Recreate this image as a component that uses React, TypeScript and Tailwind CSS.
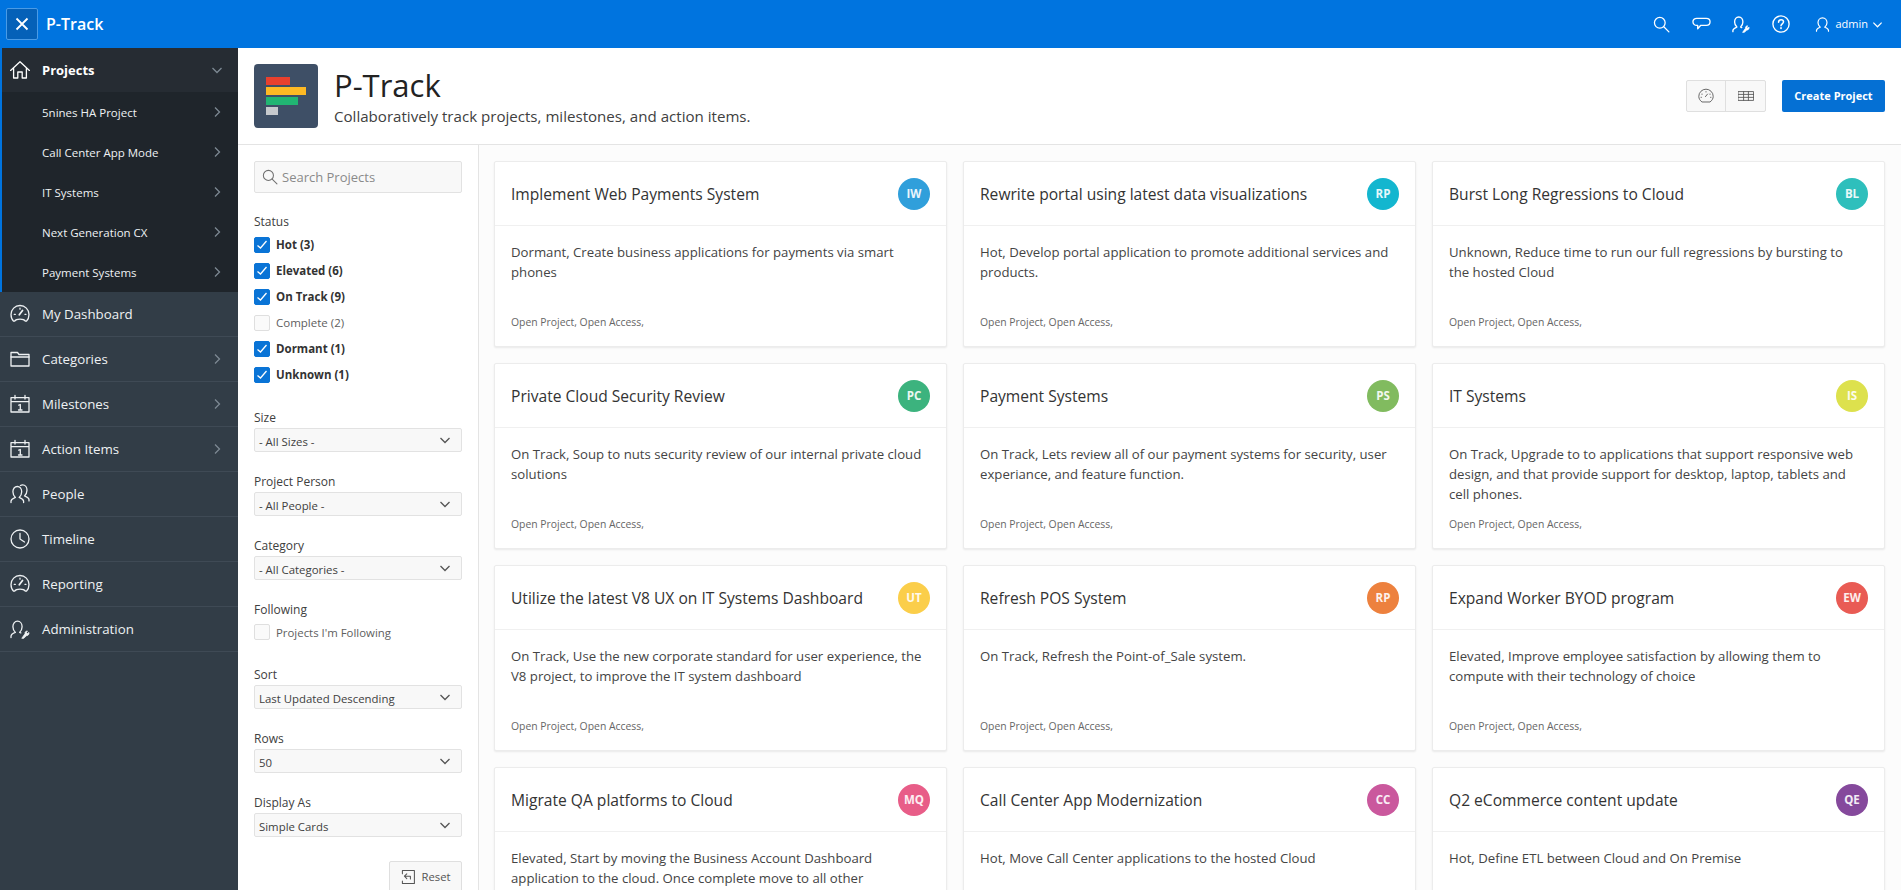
import type { ReactNode } from 'react';

type Card = {
  title: string;
  text: string;
  initials: string;
  color: string;
};

const cards: Card[] = [
  { title: 'Implement Web Payments System', text: 'Dormant, Create business applications for payments via smart phones', initials: 'IW', color: 'bg-[#309fdb]' },
  { title: 'Rewrite portal using latest data visualizations', text: 'Hot, Develop portal application to promote additional services and products.', initials: 'RP', color: 'bg-[#13b6cf]' },
  { title: 'Burst Long Regressions to Cloud', text: 'Unknown, Reduce time to run our full regressions by bursting to\nthe hosted Cloud', initials: 'BL', color: 'bg-[#2ebfbc]' },
  { title: 'Private Cloud Security Review', text: 'On Track, Soup to nuts security review of our internal private cloud solutions', initials: 'PC', color: 'bg-[#3cb37e]' },
  { title: 'Payment Systems', text: 'On Track, Lets review all of our payment systems for security, user experiance, and feature function.', initials: 'PS', color: 'bg-[#81bb5f]' },
  { title: 'IT Systems', text: 'On Track, Upgrade to to applications that support responsive web design, and that provide support for desktop, laptop, tablets and cell phones.', initials: 'IS', color: 'bg-[#dde14d]' },
  { title: 'Utilize the latest V8 UX on IT Systems Dashboard', text: 'On Track, Use the new corporate standard for user experience, the V8 project, to improve the IT system dashboard', initials: 'UT', color: 'bg-[#fbce4a]' },
  { title: 'Refresh POS System', text: 'On Track, Refresh the Point-of_Sale system.', initials: 'RP', color: 'bg-[#ed813e]' },
  { title: 'Expand Worker BYOD program', text: 'Elevated, Improve employee satisfaction by allowing them to compute with their technology of choice', initials: 'EW', color: 'bg-[#e95b54]' },
  { title: 'Migrate QA platforms to Cloud', text: 'Elevated, Start by moving the Business Account Dashboard application to the cloud. Once complete move to all other applications.', initials: 'MQ', color: 'bg-[#e85d88]' },
  { title: 'Call Center App Modernization', text: 'Hot, Move Call Center applications to the hosted Cloud', initials: 'CC', color: 'bg-[#ca589d]' },
  { title: 'Q2 eCommerce content update', text: 'Hot, Define ETL between Cloud and On Premise', initials: 'QE', color: 'bg-[#85499c]' },
];

const subItems = ['5nines HA Project', 'Call Center App Mode', 'IT Systems', 'Next Generation CX', 'Payment Systems'];

const statuses = [
  { label: 'Hot (3)', on: true },
  { label: 'Elevated (6)', on: true },
  { label: 'On Track (9)', on: true },
  { label: 'Complete (2)', on: false },
  { label: 'Dormant (1)', on: true },
  { label: 'Unknown (1)', on: true },
];

function Icon({ size = 20, width = 1.3, children }: { size?: number; width?: number; children: ReactNode }) {
  return (
    <svg width={size} height={size} viewBox="0 0 20 20" fill="none" stroke="currentColor" strokeWidth={width} strokeLinecap="round" strokeLinejoin="round">
      {children}
    </svg>
  );
}

const HomeIcon = () => (
  <Icon>
    <path d="M.6 10.400 10 1.800l9.400 8.600" />
    <path d="M3.600 8.400V18h4.200v-6h4.400v6h4.200V8.400" />
  </Icon>
);
const GaugeIcon = () => (
  <Icon>
    <path d="M4.600 17.200h-1C1.900 15.600 1 13.200 1 10.500a9 9 0 0 1 18 0c0 2.700-.9 5.100-2.600 6.700h-1c-.8-1.300-2.400-2-5.400-2s-4.600.7-5.400 2Z" />
    <path d="m9.300 10.800 3.200-4.300" strokeWidth="1.800" />
    <path d="M10 4.200v1M4.300 10.400h1M15 10.400h.9" />
  </Icon>
);
const FolderIcon = () => (
  <Icon>
    <path d="M1 17V3.500h6.500l1.500 2h10V17H1Z" />
    <path d="M1 8h18" />
  </Icon>
);
const CalendarIcon = () => (
  <Icon>
    <path d="M1 3.700h18V18H1zM1 7.700h18" />
    <path d="M5 1.500v3.500M15 1.500v3.500" />
    <path d="M8.800 11.200 10.300 10.500V16M8.500 16h3.500" />
  </Icon>
);
const PeopleIcon = () => (
  <Icon>
    <path d="M1 18.500v-1.300c0-2 2-2.700 4.400-3.700-1.600-1.600-2.500-3.300-2.500-5.700 0-3 1.800-5.300 4.400-5.300s4.400 2.300 4.400 5.300c0 2.400-.9 4.100-2.500 5.700 2.400 1 4.400 1.700 4.400 3.700v1.300" />
    <path d="M10.400 1.500c.7-.4 1.400-.6 2.200-.6 2.600 0 4.400 2.300 4.400 5.300 0 2.400-.9 4.100-2.500 5.700 2.400 1 4.500 1.700 4.500 3.700v1.300" />
  </Icon>
);
const ClockIcon = () => (
  <Icon>
    <circle cx="10" cy="10" r="9" />
    <path d="M10 4.500V10l4.500 3" />
  </Icon>
);
const AdminIcon = ({ size = 20, width = 1.3 }: { size?: number; width?: number }) => (
  <Icon size={size} width={width}>
    <path d="M1 18.500v-1.300c0-2 2-2.800 4.400-3.800-1.600-1.600-2.500-3.300-2.500-5.700 0-3 1.800-5.500 4.600-5.500s4.600 2.500 4.600 5.500c0 2.400-.9 4.100-2.500 5.700l1.200.5" />
    <path d="m12 19 3-4.300c-.3-1.300.7-2.700 2.400-2.700l-.9 1.600 1 .9 1.500-1c.2 1.900-1 3.300-2.600 3.200l-2.600 2.600Z" fill="currentColor" strokeWidth=".8" />
  </Icon>
);
const SearchIcon = ({ size = 20, width = 1.3 }: { size?: number; width?: number }) => (
  <Icon size={size} width={width}>
    <circle cx="8" cy="8" r="6.300" />
    <path d="m12.700 12.700 6 6" />
  </Icon>
);
const Chevron = ({ dir, size = 12, className = '' }: { dir: 'right' | 'down'; size?: number; className?: string }) => (
  <svg width={size} height={size} viewBox="0 0 12 12" fill="none" stroke="currentColor" strokeWidth="1.300" className={className}>
    <path d={dir === 'right' ? 'M4 1.500 8.500 6 4 10.500' : 'M1.500 4 6 8.500 10.500 4'} />
  </svg>
);

function SideRow({ icon, label, more }: { icon: ReactNode; label: string; more?: boolean }) {
  return (
    <div className="flex h-[45px] items-center border-b border-[#3f4a55] pl-[10px] pr-[15px] text-[#eef1f3]">
      <span className="flex w-[32px] shrink-0">{icon}</span>
      <span className="flex-1 pt-[2px] text-[13.3px] font-[500]">{label}</span>
      {more && <Chevron dir="right" className="text-[#7d8993]" />}
    </div>
  );
}

function Check({ on }: { on: boolean }) {
  return (
    <span className={`flex h-4 w-4 shrink-0 items-center justify-center rounded-[2px] border ${on ? 'border-[#0a74d6] bg-[#0a74d6]' : 'border-[#dfdfdf] bg-[#fafafa]'}`}>
      {on && (
        <svg width="12" height="12" viewBox="0 0 12 12" fill="none" stroke="white" strokeWidth="1.300">
          <path d="m1.500 6.500 3 2.500 6-7" />
        </svg>
      )}
    </span>
  );
}

function Select({ label, value }: { label: string; value: string }) {
  return (
    <div className="mt-[21px]">
      <div className="h-4 text-[12px] leading-[18px] text-[#404040]">{label}</div>
      <div className="mt-[3px] flex h-6 items-center justify-between rounded-[2px] border border-[#e2e2e2] bg-[#f8f8f8] pl-[4px] pr-[10px] text-[11.4px] text-[#404040]">
        <span className="pt-[3px]">{value}</span>
        <Chevron dir="down" className="text-[#555]" />
      </div>
    </div>
  );
}

function ProjectCard({ card }: { card: Card }) {
  return (
    <div className="flex h-[186px] flex-col rounded-[2px] border border-[#ececec] bg-white shadow-[0_1px_2px_rgba(0,0,0,0.08)]">
      <div className="flex h-[64px] shrink-0 items-center justify-between border-b border-[#f0f0f0] px-4">
        <h3 className="pt-[2px] text-[15.6px] font-[500] text-[#333]">{card.title}</h3>
        <span className={`flex h-8 w-8 items-center justify-center rounded-full text-[11.5px] font-bold text-white/90 ${card.color}`}>{card.initials}</span>
      </div>
      <p className="min-h-0 flex-1 whitespace-pre-line px-4 pt-4 text-[13.2px] leading-5 text-[#444]">{card.text}</p>
      <div className="flex h-[48px] shrink-0 items-center px-4 pt-[2px] text-[10.4px] text-[#666]">Open Project, Open Access,</div>
    </div>
  );
}

export default function App() {
  return (
    <div className="flex h-screen flex-col overflow-hidden bg-white font-['Open_Sans',sans-serif]">
      {/* Top bar */}
      <header className="flex h-[48px] shrink-0 items-center justify-between bg-[#0074df] pl-[6px] pr-[18px] text-white">
        <div className="flex items-center">
          <button className="flex h-8 w-8 items-center justify-center rounded-[2px] border border-[#4a9be6] bg-[#0561b8]">
            <svg width="14" height="14" viewBox="0 0 14 14" stroke="white" strokeWidth="1.800">
              <path d="m1.500 1.500 11 11M12.500 1.500l-11 11" />
            </svg>
          </button>
          <span className="ml-2 text-[16px] font-[600]">P-Track</span>
        </div>
        <div className="flex items-center">
          <span className="flex w-10 justify-center"><SearchIcon size={17} width={1.5} /></span>
          <span className="flex w-10 justify-center">
            <Icon size={19} width={1.4}>
              <path d="M5 3.500h10c2.300 0 4 1.600 4 3.700s-1.700 3.800-4 3.800H9l-3 3.500V11H5c-2.300 0-4-1.700-4-3.800s1.700-3.700 4-3.700Z" />
            </Icon>
          </span>
          <span className="flex w-10 justify-center"><AdminIcon size={18} width={1.5} /></span>
          <span className="flex w-10 justify-center">
            <Icon size={18} width={1.5}>
              <circle cx="10" cy="10" r="9" />
              <path d="M7.300 8c0-1.700 1.200-2.800 2.800-2.800s2.700 1 2.700 2.400c0 2.200-2.800 2.200-2.800 4.300" strokeWidth="1.700" />
              <path d="M10 14.300v.5" strokeWidth="1.900" />
            </Icon>
          </span>
          <span className="ml-[14px] flex items-center text-[11px] font-[500]">
            <Icon size={15} width={1.6}>
              <path d="M2 19v-1c0-2.300 2.300-3.200 5-4.300-1.800-1.700-3-3.400-3-6 0-3.500 2.300-6.500 6-6.500s6 3 6 6.500c0 2.600-1.200 4.300-3 6 2.700 1.100 5 2 5 4.300v1" />
            </Icon>
            <span className="ml-[5px]">admin</span>
            <Chevron dir="down" size={11} className="ml-[4px]" />
          </span>
        </div>
      </header>

      <div className="flex min-h-0 flex-1">
        {/* Side nav */}
        <nav className="w-[238px] shrink-0 bg-[#323d47]">
          <div className="border-l-2 border-[#0074df] bg-[#1f252b]">
            <div className="flex h-[44px] items-center bg-[#262c33] pl-[8px] pr-[15px] text-white">
              <span className="flex w-[32px] shrink-0"><HomeIcon /></span>
              <span className="flex-1 pt-[2px] text-[13px] font-[700]">Projects</span>
              <Chevron dir="down" className="text-[#7d8993]" />
            </div>
            {subItems.map((item) => (
              <div key={item} className="flex h-10 items-center pl-[40px] pr-[15px] text-[11.5px] font-[500] text-[#eef1f3]">
                <span className="flex-1 pt-[2px]">{item}</span>
                <Chevron dir="right" className="text-[#7d8993]" />
              </div>
            ))}
          </div>
          <SideRow icon={<GaugeIcon />} label="My Dashboard" />
          <SideRow icon={<FolderIcon />} label="Categories" more />
          <SideRow icon={<CalendarIcon />} label="Milestones" more />
          <SideRow icon={<CalendarIcon />} label="Action Items" more />
          <SideRow icon={<PeopleIcon />} label="People" />
          <SideRow icon={<ClockIcon />} label="Timeline" />
          <SideRow icon={<GaugeIcon />} label="Reporting" />
          <SideRow icon={<AdminIcon />} label="Administration" />
        </nav>

        <div className="flex min-w-0 flex-1 flex-col">
          {/* Page title */}
          <div className="flex h-[97px] shrink-0 items-center justify-between border-b border-[#e4e4e4] px-4">
            <div className="flex">
              <div className="flex h-16 w-16 flex-col justify-center gap-[2px] rounded-[4px] bg-[#3e4f66] pl-3">
                <span className="h-[8px] w-[24px] bg-[#e8402e]" />
                <span className="h-[8px] w-[40px] bg-[#fdb924]" />
                <span className="h-[8px] w-[32px] bg-[#21b573]" />
                <span className="h-[8px] w-[12px] bg-[#c6c9cd]" />
              </div>
              <div className="ml-4">
                <h1 className="text-[31px] leading-[42px] text-[#222]">P-Track</h1>
                <p className="text-[15.1px] leading-[20px] text-[#404040]">Collaboratively track projects, milestones, and action items.</p>
              </div>
            </div>
            <div className="flex">
              <div className="flex h-8 rounded-[2px] border border-[#dfdfdf] bg-[#f8f8f8] text-[#555]">
                <span className="flex w-[39px] items-center justify-center border-r border-[#dfdfdf]">
                  <Icon size={16} width={1.1}>
                    <path d="M4.600 17.200C2.400 15.600 1 13.200 1 10.500a9 9 0 0 1 18 0c0 2.700-1.400 5.100-3.600 6.700Z" />
                    <path d="m9.300 10.800 2.600-3.200M5 7.500v.5M10 4.500v.5M15 7.500v.5M4 11.500v.5M16 11.500v.5" />
                  </Icon>
                </span>
                <span className="flex w-[39px] items-center justify-center">
                  <Icon size={16} width={1.1}>
                    <path d="M.5 4.500h19v11H.5zM.5 8h19M.5 11.700h19M7 4.500v11M13 4.500v11" />
                  </Icon>
                </span>
              </div>
              <button className="ml-4 h-8 w-[103px] rounded-[2px] bg-[#0570d4] text-[11px] font-[700] text-white">Create Project</button>
            </div>
          </div>

          <div className="flex min-h-0 flex-1">
            {/* Filters */}
            <aside className="w-[241px] shrink-0 border-r border-[#e4e4e4] px-4 pt-4">
              <div className="flex h-8 items-center gap-[4px] rounded-[2px] border border-[#e2e2e2] bg-[#f8f8f8] pl-[7px] text-[#707070]">
                <SearchIcon size={16} />
                <span className="pt-[2px] text-[13px] text-[#8a8a8a]">Search Projects</span>
              </div>
              <div className="mt-[21px] h-4 text-[12px] leading-4 text-[#404040]">Status</div>
              <div className="mt-[2px]">
                {statuses.map((s) => (
                  <div key={s.label} className="flex h-[26px] items-center gap-[6px]">
                    <Check on={s.on} />
                    <span className={`text-[11.5px] ${s.on ? 'font-[700] text-[#333]' : 'text-[#606060]'}`}>{s.label}</span>
                  </div>
                ))}
              </div>
              <div className="mt-[1px]">
                <Select label="Size" value="- All Sizes -" />
              </div>
              <Select label="Project Person" value="- All People -" />
              <Select label="Category" value="- All Categories -" />
              <div className="mt-[21px] h-4 text-[12px] leading-[18px] text-[#404040]">Following</div>
              <div className="mt-[2px] flex h-[26px] items-center gap-[6px]">
                <Check on={false} />
                <span className="pt-[2px] text-[11.4px] text-[#606060]">Projects I'm Following</span>
              </div>
              <div className="mt-[1px]">
                <Select label="Sort" value="Last Updated Descending" />
              </div>
              <Select label="Rows" value="50" />
              <Select label="Display As" value="Simple Cards" />
              <div className="mt-6 flex justify-end">
                <button className="flex h-8 w-[73px] items-center justify-center gap-[5px] rounded-[2px] border border-[#dfdfdf] bg-[#f8f8f8] text-[11.3px] text-[#555]">
                  <Icon size={16}>
                    <path d="M3 6V2h15v16H3v-3" />
                    <path d="M13 12.500V9H6M8.500 6 5.500 9l3 3" />
                  </Icon>
                  Reset
                </button>
              </div>
            </aside>

            {/* Cards */}
            <main className="grid min-w-0 flex-1 grid-cols-3 content-start gap-4 bg-[#fcfcfc] py-4 pl-[15px] pr-4">
              {cards.map((card) => (
                <ProjectCard key={card.title} card={card} />
              ))}
            </main>
          </div>
        </div>
      </div>
    </div>
  );
}
